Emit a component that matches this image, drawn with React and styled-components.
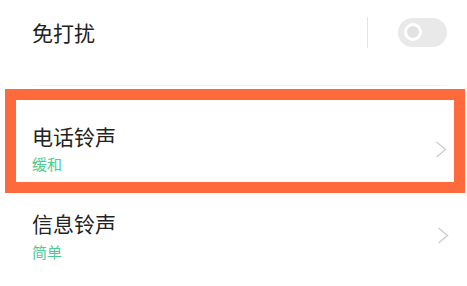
import React from "react";
import styled, { createGlobalStyle } from "styled-components";

const Global = createGlobalStyle`
  html, body { margin: 0; padding: 0; background: #fff; }
  body { font-family: "Noto Sans CJK SC", "Noto Sans", sans-serif; }
`;

const Page = styled.div`
  width: 467px;
  height: 286px;
  overflow: hidden;
  background: #fff;
  display: flex;
  flex-direction: column;
`;

const SwitchRow = styled.div`
  height: 65px;
  display: flex;
  align-items: center;
  padding: 0 20px 0 32px;
`;

const Title = styled.div`
  font-size: 21px;
  line-height: 28px;
  color: #222;
  flex: 1;
`;

const Divider = styled.div`
  width: 1px;
  height: 31px;
  background: #e4e4e4;
  margin-right: 30px;
`;

const Toggle = styled.div`
  width: 49px;
  height: 29px;
  border-radius: 15px;
  background: #e9e9e9;
  display: flex;
  align-items: center;
  padding-left: 6px;
  box-sizing: border-box;
`;

const Knob = styled.div`
  width: 18px;
  height: 18px;
  border-radius: 50%;
  border: 3.5px solid #fff;
  box-sizing: border-box;
  background: #e2e2e2;
`;

const Separator = styled.div`
  height: 1px;
  margin: 20px 20px 0 33px;
  background: #f2f2f2;
`;

const Highlight = styled.div`
  margin: 3px 2px 0 5px;
  border: 11px solid #ff6a3c;
`;

const Item = styled.div`
  display: flex;
  align-items: flex-start;
  padding: ${(p) => p.$pad};
  height: ${(p) => p.$h}px;
  box-sizing: border-box;
`;

const Texts = styled.div`
  flex: 1;
  display: flex;
  flex-direction: column;
  gap: ${(p) => p.$gap}px;
`;

const Sub = styled.div`
  font-size: 15px;
  line-height: 20px;
  color: #4ccb91;
`;

const Chevron = styled.svg`
  width: 12px;
  height: 17px;
  margin-top: ${(p) => p.$top}px;
`;

const Arrow = ({ top }) => (
  <Chevron $top={top} viewBox="0 0 12 17">
    <path d="M1.5 1 L10.5 8.5 L1.5 16" fill="none" stroke="#cdcdcd" strokeWidth="1.4" />
  </Chevron>
);

export default function App() {
  return (
    <Page>
      <Global />
      <SwitchRow>
        <Title>免打扰</Title>
        <Divider />
        <Toggle>
          <Knob />
        </Toggle>
      </SwitchRow>
      <Separator />
      <Highlight>
        <Item $pad="22px 7px 0 16px" $h={82}>
          <Texts $gap={4}>
            <Title>电话铃声</Title>
            <Sub>缓和</Sub>
          </Texts>
          <Arrow top={19} />
        </Item>
      </Highlight>
      <Item $pad="16px 18px 0 32px" $h={94}>
        <Texts $gap={5}>
          <Title>信息铃声</Title>
          <Sub>简单</Sub>
        </Texts>
        <Arrow top={18} />
      </Item>
    </Page>
  );
}
